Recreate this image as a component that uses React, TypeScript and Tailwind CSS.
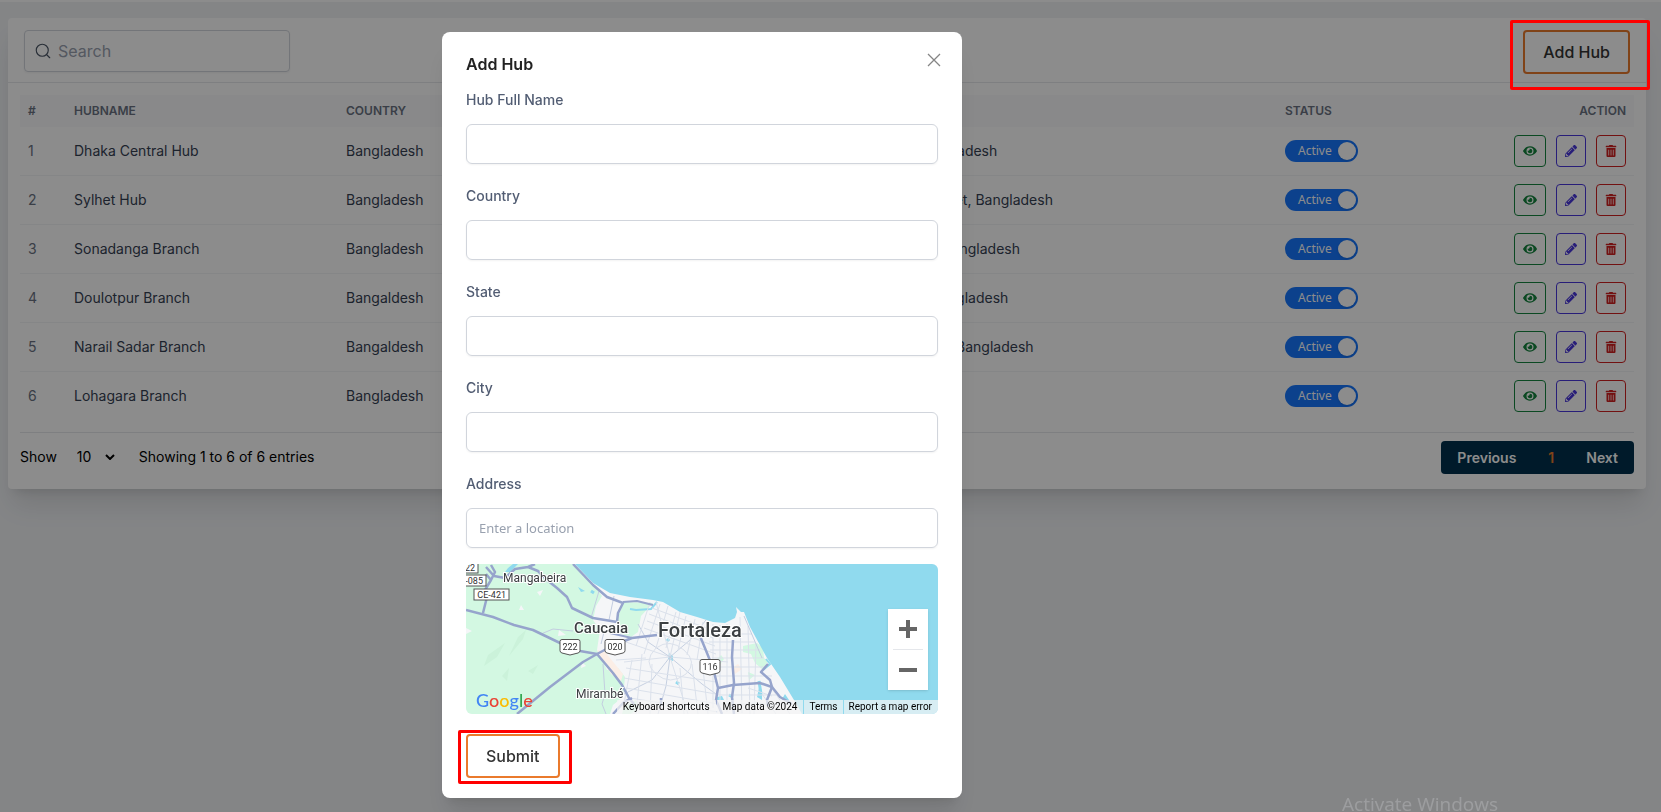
import { Search } from "lucide-react";
import { FaEye, FaPencilAlt, FaTrashAlt } from "react-icons/fa";

const hubs = [
  { name: "Dhaka Central Hub", country: "Bangladesh", address: "Dhaka, Bangladesh" },
  { name: "Sylhet Hub", country: "Bangladesh", address: "Kotwali, Sylhet, Bangladesh" },
  { name: "Sonadanga Branch", country: "Bangladesh", address: "Chandpur, Bangladesh" },
  { name: "Doulotpur Branch", country: "Bangaldesh", address: "Phultala, Bangladesh" },
  { name: "Narail Sadar Branch", country: "Bangaldesh", address: "Narail Town, Bangladesh" },
  { name: "Lohagara Branch", country: "Bangladesh", address: "Lohagara" },
];

const fields = [
  { id: "hub-name", label: "Hub Full Name" },
  { id: "country", label: "Country" },
  { id: "state", label: "State" },
  { id: "city", label: "City" },
  { id: "address", label: "Address", placeholder: "Enter a location" },
];

const outlineButton =
  "h-11 rounded border-2 border-[#ea7a2c] px-[18px] text-base font-medium text-[#333]";

const CITY =
  "M127 22 L144 31 L164 35 L197 38 L214 48 L231 53 L247 58 L259 59 L269 54 L278 48 L284 63 L301 94 L314 113 L331 141 L336 150 L144 150 L159 133 L159 113 L141 106 L131 86 L150 58 Z";

function StatusSwitch({ name }: { name: string }) {
  return (
    <label className="inline-flex h-[22px] w-[73px] cursor-pointer items-center justify-between rounded-full bg-[#1677ff] pr-[2px] pl-[13px] align-middle">
      <input type="checkbox" role="switch" defaultChecked aria-label={`${name} status`} className="sr-only" />
      <span className="font-['Noto_Sans',sans-serif] text-xs text-white">Active</span>
      <span className="size-[18px] rounded-full bg-white shadow-sm" />
    </label>
  );
}

function RowActions() {
  return (
    <div className="flex justify-end gap-[10px]">
      <button aria-label="View" className="flex h-8 w-8 items-center justify-center rounded border border-[#15853f] text-[#15853f]">
        <FaEye size={14} />
      </button>
      <button aria-label="Edit" className="flex h-8 w-[30px] items-center justify-center rounded border border-[#4a38dc] text-[#4a38dc]">
        <FaPencilAlt size={12} />
      </button>
      <button aria-label="Delete" className="flex h-8 w-[30px] items-center justify-center rounded border border-[#d01f1f] text-[#d01f1f]">
        <FaTrashAlt size={12} />
      </button>
    </div>
  );
}

function HubTable() {
  return (
    <table className="w-full table-fixed text-left text-sm text-gray-700">
      <thead className="bg-gray-50 text-xs text-gray-500 uppercase">
        <tr className="h-8">
          <th className="w-[46px] px-2 font-semibold">#</th>
          <th className="w-[272px] px-2 font-semibold">Hubname</th>
          <th className="w-[175px] px-2 font-semibold">Country</th>
          <th className="w-[349px] px-2 font-semibold">State</th>
          <th className="px-2 font-semibold">Address</th>
          <th className="w-[148px] px-2 font-semibold">Status</th>
          <th className="w-[209px] px-2 text-right font-semibold">Action</th>
        </tr>
      </thead>
      <tbody>
        {hubs.map((hub, i) => (
          <tr key={hub.name} className="border-b border-gray-100 last:border-b-0">
            <td className="px-2 py-2 text-gray-500">{i + 1}</td>
            <td className="px-2 py-2">{hub.name}</td>
            <td className="px-2 py-2">{hub.country}</td>
            <td className="px-2 py-2" />
            <td className="px-2 py-2">{hub.address}</td>
            <td className="px-2 py-2">
              <StatusSwitch name={hub.name} />
            </td>
            <td className="px-2 py-2">
              <RowActions />
            </td>
          </tr>
        ))}
      </tbody>
    </table>
  );
}

function TableFooter() {
  return (
    <div className="flex items-start justify-between border-t border-gray-200 pt-2">
      <div className="flex h-8 items-center text-sm text-black">
        <label htmlFor="page-size">Show</label>
        <div className="relative ml-5 flex items-center">
          <select id="page-size" className="w-[38px] appearance-none bg-transparent">
            <option>10</option>
          </select>
          <svg viewBox="0 0 10 6" className="pointer-events-none absolute right-0 h-[6px] w-[10px]" fill="none" stroke="currentColor" strokeWidth="2">
            <path d="M1 1l4 4 4-4" />
          </svg>
        </div>
        <span className="ml-6">Showing 1 to 6 of 6 entries</span>
      </div>
      <nav className="flex h-[33px] items-center rounded bg-[#00314e] text-sm font-semibold text-white">
        <button className="px-4">Previous</button>
        <button className="px-4 text-[#ea7a2c]">1</button>
        <button className="px-4">Next</button>
      </nav>
    </div>
  );
}

function RouteShield({ x, y, label }: { x: number; y: number; label: string }) {
  return (
    <g transform={`translate(${x} ${y})`}>
      <path d="M-8 -7.500h16q2 0 2 2v9q0 2-2 2.500l-8 2-8-2q-2-.5-2-2.500v-9q0-2 2-2z" fill="#fff" stroke="#555" strokeWidth="1" />
      <text y="3" textAnchor="middle" fontSize="9" fill="#333">{label}</text>
    </g>
  );
}

function RouteBox({ x, y, w, label }: { x: number; y: number; w: number; label: string }) {
  return (
    <g transform={`translate(${x} ${y})`}>
      <rect width={w} height="11" fill="#fff" stroke="#555" strokeWidth="1" />
      <text x={w - 3} y="9" textAnchor="end" fontSize="9" fill="#333">{label}</text>
    </g>
  );
}

function MapDrawing() {
  return (
    <svg viewBox="0 0 472 150" preserveAspectRatio="xMinYMin slice" className="h-full w-full font-[Roboto,sans-serif]">
      <defs>
        <clipPath id="city">
          <path d={CITY} />
        </clipPath>
      </defs>
      <rect width="472" height="150" fill="#f5f6f8" />

      {/* vegetation */}
      <path d="M0 0H107L127 20 136 32 130 42 127 56 134 66 131 86 141 106 152 104 159 113 157 133 147 141 144 150H0z" fill="#d3f8e2" />
      <path d="M158 38L187 39 175 52 172 68 165 73 150 68 153 50z" fill="#d3f8e2" />
      <path d="M277 82l14-3 6 5 1 10 4 3-5 9-8-7-4-9-8-2zM247 100l8-9 3 4-6 8zM282 108l7 3-6 5zM158 142l12-6 4 7-9 7h-9z" fill="#d3f8e2" />
      <path d="M71 28l6-2-3 6zM55 41l3 5h-5zM93 66l7 5-8 1zM0 64l6 3-6 3zM116 98l4 4-5 2z" fill="#f5f6f8" />
      <path d="M52 73l8-7-3 9-14 17zM22 91l17-12-8 14-13 9zM62 107l10-6-5 9zM36 112l7-8-2 13z" fill="#cbf2da" />
      <path d="M131 86l8 2 18 22-2 7-10-7-6-10zM266 104l6-4 4 5-7 5z" fill="#fbeee6" />

      {/* ocean, lagoons and rivers */}
      <path d="M109 0L127 19 144 29 164 33 187 36 197 38 214 48 231 53 247 58 259 59 269 54 271 48 270 43 275 48 278 48 284 63 301 94 314 113 331 141 336 150H472V0z" fill="#90daee" />
      <path d="M42 4L47 0H52L44 8H39zM112 23l7 4-4 1zM203 89l4 3v5l-5-2zM293 124l3 2v10l-5-3zM251 133l5-1 2 4h-7zM319 130l6 9-9-4z" fill="#90daee" />
      <path d="M164 45l6 1 15-1 6-7M300 95l4 5-7 6" fill="none" stroke="#90daee" strokeWidth="2" />
      <path d="M293 117l2 13M210 118l3 2M201 75l2 2M263 131l4 2M125 27l3 2" stroke="#90daee" strokeWidth="3" />

      {/* local streets */}
      <g clipPath="url(#city)" fill="none" stroke="#dbe1eb" strokeWidth="1">
        <path d="M204 93L190 38M204 93L214 48M204 93L262 98M204 93L222 150M204 93L158 98M204 93L160 78" />
        <path stroke="#c6d0e1" d="M204 93L182 78 172 60M204 93L224 76 240 56M204 93L236 120 250 130M204 93L186 116 158 130M204 93L200 122 192 150" />
        <path d="M186 44l60 22M183 50l64 24M181 57l68 25M178 64l72 26M184 38l-14 44M194 40l-16 50M202 42l-12 42M210 48l-10 36M220 52l-8 34M229 55l-8 36M237 58l-6 38" />
        <path d="M247 60v84M254 61v86M261 60v88M274 53l2 96M282 62l2 88M290 80l-2 70M242 70h44M243 78h46M244 86h50M246 94h52M250 103h50M250 112h56M250 131h62M250 140h74" />
        <path d="M190 84q14-10 28 2t2 24q-16 12-30 0t0-26" />
        <path d="M160 104l90 14M158 114l92 16M160 124l92 16M164 134l88 14M166 96l-8 44M176 90l-6 60M186 100l-2 50M214 104l4 46M226 100l6 50M236 96l6 54M150 96l30-2" />
        <path d="M304 122l20 28M296 130l14 20M282 124l24 8M286 138l20 4" />
      </g>
      <path d="M133 27L125 54M148 32L143 56M75 70l12-5 20 2M138 68l-3 12M137 100l2 30-3 10 4 10M230 66l12 4M278 52l18 42" fill="none" stroke="#c3cde0" strokeWidth="1" />

      {/* highways */}
      <g fill="none" stroke="#96a4cc" strokeWidth="2.500" strokeLinejoin="round">
        <path d="M0 46L27 53 48 61 67 66 94 79 114 87 131 90 148 81 166 74 191 71" />
        <path d="M51 150L84 123 117 98 131 90 147 109 156 121 163 134 168 140M147 150l11-12 8-4" />
        <path d="M107 0L127 21 141 33 157 39 152 49 151 58 127 54 106 44 101 33 91 24 81 16 72 7 62 3 49 5 39 14 28 12 20 3M62 3L69 0" />
        <path d="M17 49L21 33 19 26 25 16 29 8 25 1M25 16l-5-6" />
        <path d="M144 69l22 5M157 38l14-1 16 4" strokeWidth="2" />
        <path d="M234 72L241 89 247 104 252 124 250 136 256 150" />
        <path d="M267 76L266 93 268 119 266 133 268 150" />
        <path d="M252 124L267 121 294 119 306 123 314 133 326 140" />
        <path d="M302 100L295 108 304 116 306 123 301 136 302 142M195 134v8" />
      </g>

      <RouteBox x={-10} y={-2} w={22} label="22" />
      <RouteBox x={-8} y={11} w={28} label="-085" />
      <RouteBox x={8} y={25} w={35} label="CE-421" />
      <RouteShield x={104} y={83} label="222" />
      <RouteShield x={149} y={83} label="020" />
      <RouteShield x={244} y={103} label="116" />

      <g fill="#3c4043" stroke="#fff" strokeWidth="2" paintOrder="stroke">
        <text x="37" y="18" fontSize="12">Mangabeira</text>
        <text x="108" y="69" fontSize="15" fontWeight="500">Caucaia</text>
        <text x="192" y="73" fontSize="20" fontWeight="500">Fortaleza</text>
        <text x="110" y="134" fontSize="12">Mirambé</text>
      </g>
    </svg>
  );
}

function LocationMap() {
  return (
    <div className="relative h-[150px] overflow-hidden rounded-md">
      <MapDrawing />
      <a href="#google" className="absolute bottom-0 left-[10px] font-[Lato,sans-serif] text-lg font-medium">
        <span className="text-[#4285f4]">G</span>
        <span className="text-[#ea4335]">o</span>
        <span className="text-[#fbbc04]">o</span>
        <span className="text-[#4285f4]">g</span>
        <span className="text-[#34a853]">l</span>
        <span className="text-[#ea4335]">e</span>
      </a>
      <div className="absolute right-[10px] bottom-6 flex w-10 flex-col items-center bg-white shadow">
        <button aria-label="Zoom in" className="flex h-10 w-10 items-center justify-center">
          <svg viewBox="0 0 18 18" className="size-[18px]" fill="#666">
            <path d="M7 0h4v7h7v4h-7v7H7v-7H0V7h7z" />
          </svg>
        </button>
        <span className="h-px w-[30px] bg-gray-200" />
        <button aria-label="Zoom out" className="flex h-10 w-10 items-center justify-center">
          <svg viewBox="0 0 18 18" className="size-[18px]" fill="#666">
            <path d="M0 7h18v4H0z" />
          </svg>
        </button>
      </div>
      <div className="absolute right-0 bottom-0 flex h-[14px] items-center gap-px font-[Roboto,sans-serif] text-[10px] leading-[14px] text-black">
        <button className="bg-[#f5f5f5]/70 px-[6px]">Keyboard shortcuts</button>
        <span className="bg-[#f5f5f5]/70 px-[6px]">Map data ©2024</span>
        <a href="#terms" className="bg-[#f5f5f5]/70 px-[5px]">Terms</a>
        <a href="#report" className="bg-[#f5f5f5]/70 pr-[6px] pl-[5px]">Report a map error</a>
      </div>
    </div>
  );
}

function AddHubModal() {
  return (
    <div role="dialog" aria-labelledby="modal-title" className="relative w-[520px] rounded-lg bg-white px-6 py-5 shadow-xl">
      <button aria-label="Close" className="absolute top-[17px] right-[17px] flex size-[22px] items-center justify-center text-[#858585]">
        <svg viewBox="0 0 14 14" className="size-[14px]" fill="none" stroke="currentColor" strokeWidth="1.300">
          <path d="M1 1l12 12M13 1L1 13" />
        </svg>
      </button>
      <h2 id="modal-title" className="text-base leading-6 font-semibold text-[#222]">Add Hub</h2>
      <form className="mt-[14px]">
        <div className="flex flex-col gap-[22px]">
          {fields.map((field) => (
            <div key={field.id} className="flex flex-col gap-[14px]">
              <label htmlFor={field.id} className="text-sm leading-5 font-medium text-[#525d73]">
                {field.label}
              </label>
              <input
                id={field.id}
                type="text"
                placeholder={field.placeholder}
                className="h-10 rounded-md border border-gray-300 px-3 font-['Noto_Sans',sans-serif] text-[13px] shadow-xs placeholder:text-gray-400"
              />
            </div>
          ))}
        </div>
        <div className="mt-4 mb-5">
          <LocationMap />
        </div>
        <div className="relative w-fit">
          <button type="button" className={outlineButton}>Submit</button>
          <span className="pointer-events-none absolute -top-1 -right-3 -bottom-[6px] -left-2 rounded-xs border-3 border-[#ff0000]" />
        </div>
      </form>
    </div>
  );
}

export default function App() {
  return (
    <div className="min-h-screen bg-[#f0f2f5] font-[Inter,sans-serif]">
      <header className="h-[2px] bg-white shadow-md" />
      <main className="pt-4 pr-[15px] pl-2">
        <section className="rounded-sm bg-white shadow-xl">
          <div className="flex items-start justify-between border-b border-gray-200 px-4 pt-3 pb-2">
            <label className="flex h-[42px] w-[266px] items-center gap-[6px] rounded border border-gray-300 px-[9px] shadow-xs">
              <Search size={18} strokeWidth={1.5} className="shrink-0 text-gray-600" />
              <input type="text" placeholder="Search" aria-label="Search" className="w-full text-base outline-none placeholder:text-gray-400" />
            </label>
            <button className={outlineButton}>Add Hub</button>
          </div>
          <div className="px-3 pt-3 pb-[15px]">
            <HubTable />
            <div className="mt-3">
              <TableFooter />
            </div>
          </div>
        </section>
      </main>

      <div className="fixed inset-0 z-10 flex items-start justify-center overflow-hidden bg-black/45 pt-8 pr-[257px]">
        <AddHubModal />
        <span className="pointer-events-none absolute top-5 right-[11px] h-[70px] w-[140px] rounded-xs border-3 border-[#ff0000]" />
        <p className="pointer-events-none absolute right-[163px] -bottom-[6px] font-['Open_Sans',sans-serif] text-[19px] text-white/20">
          Activate Windows
        </p>
      </div>
    </div>
  );
}
